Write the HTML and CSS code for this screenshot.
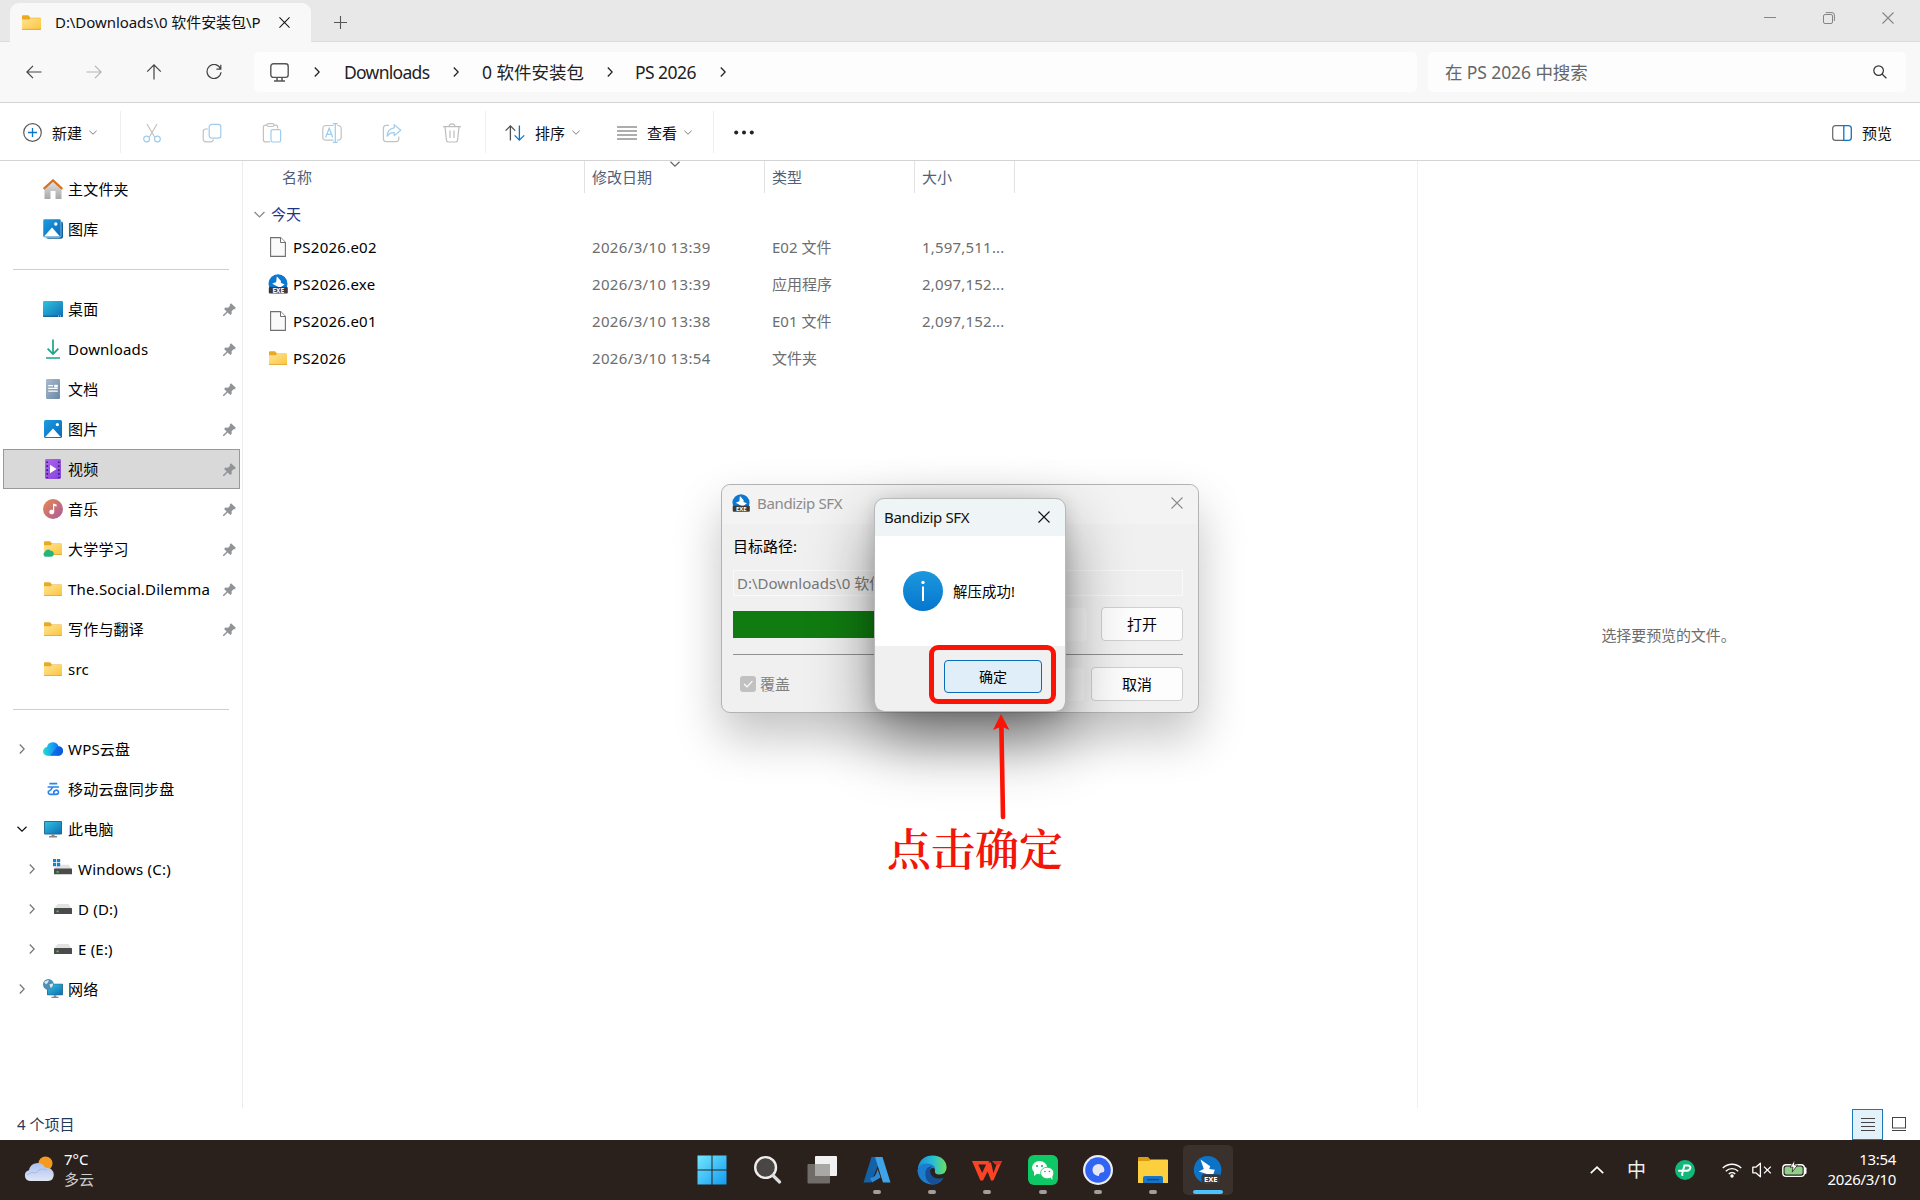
FILE: index.html
```
<!DOCTYPE html>
<html lang="zh-CN">

<head>
    <meta charset="UTF-8">
    <meta name="viewport" content="width=device-width, initial-scale=1.0">
    <title>PS 2026</title>
    <link rel="stylesheet" href="styles.css">
</head>

<body>
    <!-- 图标 -->
    <svg class="defs" width="0" height="0">
        <defs>
            <linearGradient id="gFolder" x1="0" y1="0" x2="1" y2="1"><stop offset="0" stop-color="#ffe394"/><stop offset="1" stop-color="#fbc53c"/></linearGradient>
            <linearGradient id="gBlue" x1="0" y1="0" x2="1" y2="1"><stop offset="0" stop-color="#1b9de2"/><stop offset="1" stop-color="#0a68b8"/></linearGradient>
            <linearGradient id="gInfo" x1="0" y1="0" x2="0" y2="1"><stop offset="0" stop-color="#1c98dc"/><stop offset="1" stop-color="#0676cf"/></linearGradient>
            <linearGradient id="gDesk" x1="0" y1="0" x2="1" y2="1"><stop offset="0" stop-color="#2fc3e0"/><stop offset="1" stop-color="#0f6fb5"/></linearGradient>
            <linearGradient id="gHome" x1="0" y1="0" x2="0" y2="1"><stop offset="0" stop-color="#e4e4e4"/><stop offset="1" stop-color="#a8a8a8"/></linearGradient>
            <linearGradient id="gMusic" x1="0" y1="0" x2="1" y2="1"><stop offset="0" stop-color="#ea8a4e"/><stop offset="1" stop-color="#a8589e"/></linearGradient>
            <linearGradient id="gVideo" x1="0" y1="0" x2="1" y2="1"><stop offset="0" stop-color="#b164f0"/><stop offset="1" stop-color="#8344d8"/></linearGradient>
            <linearGradient id="gDoc" x1="0" y1="0" x2="1" y2="1"><stop offset="0" stop-color="#a9bccd"/><stop offset="1" stop-color="#6a86a5"/></linearGradient>
            <linearGradient id="gCloud" x1="0" y1="0" x2="1" y2="0"><stop offset="0" stop-color="#1fe0cc"/><stop offset=".5" stop-color="#199cf5"/><stop offset="1" stop-color="#0a52e0"/></linearGradient>
            <linearGradient id="gWin" x1="0" y1="0" x2="1" y2="1"><stop offset="0" stop-color="#74e6fd"/><stop offset="1" stop-color="#119cf2"/></linearGradient>
            <linearGradient id="gEdge" x1="0" y1="0" x2="1" y2="0"><stop offset="0" stop-color="#1b8fd6"/><stop offset=".5" stop-color="#25bcd8"/><stop offset="1" stop-color="#6be05a"/></linearGradient>
            <linearGradient id="gWeather" x1="0" y1="0" x2="0" y2="1"><stop offset="0" stop-color="#a9c0ee"/><stop offset="1" stop-color="#dfe6f6"/></linearGradient>
        </defs>
        <symbol id="folder" viewBox="0 0 18 14">
            <path d="M0 1.2Q0 .2 1 .2H6L8 2.4H17Q18 2.4 18 3.4V8H0Z" fill="#e9a921"/>
            <path d="M0 4.2H6.5L8 3H18V13Q18 14 17 14H1Q0 14 0 13Z" fill="url(#gFolder)"/>
            <path d="M0 13.5H18" stroke="#dda634" stroke-width=".8"/>
        </symbol>
        <symbol id="file" viewBox="0 0 16 20">
            <path d="M.6 .6H10.5L15.4 5.5V19.4H.6Z" fill="#fafafa" stroke="#707070" stroke-width="1.1"/>
            <path d="M10.5 .6V5.5H15.4" fill="#fff" stroke="#707070" stroke-width="1"/>
        </symbol>
        <symbol id="exe" viewBox="0 0 20 20">
            <circle cx="10" cy="9.7" r="9.5" fill="#0c78cf"/>
            <path d="M8.8 2.2L13 7L12.8 8.8L16.6 10.4L13 13H10.4L4.2 9.8L8.2 8Z" fill="#fff"/>
            <rect x=".8" y="13" width="19" height="6.6" rx="1" fill="#3a3a3a"/>
        </symbol>
        <symbol id="close" viewBox="0 0 12 12"><path d="M.5 .5L11.5 11.5M11.5 .5L.5 11.5" fill="none" stroke="currentColor" stroke-width="1.1"/></symbol>
        <symbol id="right" viewBox="0 0 6 10"><path d="M.8 .5L5.2 5L.8 9.5" fill="none" stroke="currentColor" stroke-width="1.3"/></symbol>
        <symbol id="down" viewBox="0 0 10 6"><path d="M.5 .8L5 5.2L9.5 .8" fill="none" stroke="currentColor" stroke-width="1.2"/></symbol>
        <symbol id="pin" viewBox="0 0 14 14">
            <path d="M8.6 .4L13.8 5.2L12.6 6.8L11.4 6.6L9.2 8.8L9.4 11.6L7.8 13L5 10.2L1.2 14L0 14L0 13L3.9 9.1L1.2 6.4L2.6 4.8L5.4 5.1L7.6 2.9L7.3 1.6Z" fill="#8f9499"/>
        </symbol>
        <symbol id="drive" viewBox="0 0 18 10">
            <path d="M3.5 0H14.5L18 5H0Z" fill="#e2e2e2"/>
            <rect y="4" width="18" height="6" rx=".6" fill="#4b4b4b"/>
            <rect x="2.6" y="6.6" width="2" height="1.6" fill="#45d848"/>
        </symbol>
        <symbol id="monitor" viewBox="0 0 18 17">
            <rect width="18" height="13.4" rx=".8" fill="#27698e"/>
            <rect x=".9" y=".9" width="16.2" height="11.6" fill="url(#gDesk)"/>
            <path d="M7.5 13.4H10.5V15H13V16.4H5V15H7.5Z" fill="#878787"/>
        </symbol>
        <symbol id="picture" viewBox="0 0 18 18">
            <rect width="18" height="18" rx="1.6" fill="url(#gBlue)"/>
            <path d="M1.2 17L9 8.6L16.8 17Z" fill="#fff"/><circle cx="13.4" cy="4.6" r="1.6" fill="#fff"/>
        </symbol>
    </svg>

    <!-- 标题栏 -->
    <div class="titlebar">
        <div class="tab">
            <svg class="tab-icon" width="19" height="15"><use href="#folder"/></svg>
            <span class="tab-title">D:\Downloads\0 软件安装包\P</span>
            <svg width="11" height="11"><use href="#close"/></svg>
        </div>
        <svg class="tab-add" width="13" height="13" viewBox="0 0 13 13"><path d="M6.5 0V13M0 6.5H13" stroke="#555" stroke-width="1.1"/></svg>
        <div class="win-btns">
            <svg width="12" height="12" viewBox="0 0 12 12"><path d="M0 5.5H12" stroke="#858585"/></svg>
            <svg width="12" height="12" viewBox="0 0 12 12"><rect x=".5" y="2.5" width="9" height="9" rx="1.5" fill="none" stroke="#858585"/><path d="M2.8 .6H9Q11.4 .6 11.4 3V9" fill="none" stroke="#858585"/></svg>
            <svg width="12" height="12"><use href="#close"/></svg>
        </div>
    </div>

    <!-- 地址栏 -->
    <div class="navbar">
        <div class="nav-btns">
            <svg width="16" height="14" viewBox="0 0 16 14"><path d="M15.5 7H1M7 .8L.9 7L7 13.2" fill="none" stroke="#444" stroke-width="1.2"/></svg>
            <svg width="16" height="14" viewBox="0 0 16 14"><path d="M.5 7H15M9 .8L15.1 7L9 13.2" fill="none" stroke="#b4b4b4" stroke-width="1.2"/></svg>
            <svg width="16" height="16" viewBox="0 0 16 16"><path d="M8 15.5V1M1.2 7.6L8 .9L14.8 7.6" fill="none" stroke="#444" stroke-width="1.2"/></svg>
            <svg width="16" height="16" viewBox="0 0 16 16"><path d="M14.6 5A7 7 0 1 0 15 8.2M14.8 .8V5.2H10.4" fill="none" stroke="#444" stroke-width="1.2"/></svg>
        </div>
        <div class="address">
            <svg class="pc" width="19" height="19" viewBox="0 0 19 19"><rect x=".8" y=".8" width="17.4" height="13.6" rx="2.6" fill="none" stroke="#555" stroke-width="1.4"/><path d="M7 14.5V17.5M12 14.5V17.5M4 18H15" fill="none" stroke="#555" stroke-width="1.5"/></svg>
            <svg class="sep" width="6" height="10"><use href="#right"/></svg>
            <span class="crumb crumb-1">Downloads</span>
            <svg class="sep" width="6" height="10"><use href="#right"/></svg>
            <span class="crumb crumb-2">0 软件安装包</span>
            <svg class="sep" width="6" height="10"><use href="#right"/></svg>
            <span class="crumb crumb-3">PS 2026</span>
            <svg class="sep" width="6" height="10"><use href="#right"/></svg>
        </div>
        <div class="search">
            <span>在 PS 2026 中搜索</span>
            <svg width="14" height="14" viewBox="0 0 14 14"><circle cx="5.6" cy="5.6" r="4.8" fill="none" stroke="#333" stroke-width="1.2"/><path d="M9 9L13.4 13.2" stroke="#333" stroke-width="1.2"/></svg>
        </div>
    </div>

    <!-- 工具栏 -->
    <div class="toolbar">
        <div class="tool new">
            <svg width="19" height="19" viewBox="0 0 19 19"><circle cx="9.5" cy="9.5" r="8.8" fill="none" stroke="#5c5c5c" stroke-width="1.2"/><path d="M9.5 5V14M5 9.5H14" stroke="#0b74c8" stroke-width="1.3"/></svg>
            <span>新建</span>
            <svg class="arrow" width="8" height="5"><use href="#down"/></svg>
        </div>
        <div class="tool-icons">
            <svg viewBox="0 0 20 20"><path d="M5 1L12.6 14M15 1L7.4 14" fill="none" stroke="#c2c2c2" stroke-width="1.2"/><circle cx="4.6" cy="16" r="2.9" fill="none" stroke="#9dccef" stroke-width="1.2"/><circle cx="15.4" cy="16" r="2.9" fill="none" stroke="#9dccef" stroke-width="1.2"/></svg>
            <svg viewBox="0 0 20 20"><path d="M6 6H4Q1.2 6 1.2 8.8V16Q1.2 18.8 4 18.8H8.5Q11 18.8 11.4 16.6" fill="none" stroke="#c2c2c2" stroke-width="1.2"/><rect x="7.2" y="1.4" width="11.6" height="13.8" rx="2.6" fill="none" stroke="#9dccef" stroke-width="1.2"/></svg>
            <svg viewBox="0 0 20 20"><path d="M5 2.2H3.4Q1.4 2.2 1.4 4.2V16.8Q1.4 18.8 3.4 18.8H8M12 2.2H13.6Q15.6 2.2 15.6 4.2V5.6" fill="none" stroke="#c2c2c2" stroke-width="1.2"/><rect x="5" y=".7" width="7" height="2.8" rx="1.4" fill="none" stroke="#c2c2c2" stroke-width="1.2"/><rect x="9" y="6.6" width="9.6" height="12.4" rx="1.4" fill="none" stroke="#9dccef" stroke-width="1.2"/></svg>
            <svg viewBox="0 0 20 20"><path d="M11.5 2.5H4Q.8 2.5 .8 5.7V14Q.8 17.2 4 17.2H11.5M15.2 2.5H16Q19.2 2.5 19.2 5.7V14Q19.2 17.2 16 17.2H15.2" fill="none" stroke="#c2c2c2" stroke-width="1.2"/><path d="M3.6 14.5L7.2 5.2L10.8 14.5M5 11.4H9.5M13.3 .8V19.2M10.8 .7H15.8M10.8 19.3H15.8" fill="none" stroke="#9dccef" stroke-width="1.2"/></svg>
            <svg viewBox="0 0 20 20"><path d="M7 2.4H4.2Q1.4 2.4 1.4 5.2V15.8Q1.4 18.6 4.2 18.6H14Q16.8 18.6 16.8 15.8V13.5" fill="none" stroke="#c2c2c2" stroke-width="1.2"/><path d="M12.2 1.6L18.8 7.2L12.2 12.6V9.6Q7.8 9.2 5.2 13.2Q5.4 5.6 12.2 4.8Z" fill="none" stroke="#9dccef" stroke-width="1.2" stroke-linejoin="round"/></svg>
            <svg viewBox="0 0 20 20"><path d="M1 3.6H19M7 3.4Q7.4 .8 10 .8T13 3.4M3 3.8L4.4 17Q4.6 19 6.4 19H13.6Q15.4 19 15.6 17L17 3.8M8 7.5V15M12 7.5V15" fill="none" stroke="#bdbdbd" stroke-width="1.2"/></svg>
        </div>
        <div class="tool sort">
            <svg width="20" height="16" viewBox="0 0 20 16"><path d="M5.4 15.5V1M.6 5.6L5.4 .9L10.2 5.6" fill="none" stroke="#505050" stroke-width="1.3"/><path d="M14.4 .5V15M9.6 10.4L14.4 15.1L19.2 10.4" fill="none" stroke="#0b74c8" stroke-width="1.3"/></svg>
            <span>排序</span>
            <svg class="arrow" width="8" height="5"><use href="#down"/></svg>
        </div>
        <div class="tool view">
            <svg width="20" height="14" viewBox="0 0 20 14"><path d="M0 1H20M0 5H20M0 9H20M0 13H20" stroke="#5c5c5c" stroke-width="1.2"/></svg>
            <span>查看</span>
            <svg class="arrow" width="8" height="5"><use href="#down"/></svg>
        </div>
        <svg class="more" width="20" height="5" viewBox="0 0 20 5"><circle cx="2.2" cy="2.5" r="2"/><circle cx="10" cy="2.5" r="2"/><circle cx="17.8" cy="2.5" r="2"/></svg>
        <div class="tool preview-btn">
            <svg width="20" height="16" viewBox="0 0 20 16"><path d="M12 .7H3.6Q.7 .7 .7 3.6V12.4Q.7 15.3 3.6 15.3H12" fill="none" stroke="#666" stroke-width="1.2"/><path d="M11.8 .7H16.4Q19.3 .7 19.3 3.6V12.4Q19.3 15.3 16.4 15.3H11.8Z" fill="none" stroke="#0b74c8" stroke-width="1.3"/></svg>
            <span>预览</span>
        </div>
    </div>

    <div class="main">
        <!-- 侧边导航 -->
        <div class="sidebar">
            <div class="item">
                <svg width="20" height="20" viewBox="0 0 20 20"><path d="M1.5 9L10 1.5L18.5 9V20H12.5V12H7.5V20H1.5Z" fill="url(#gHome)"/><path d="M.6 10L10 1.4L19.4 10" fill="none" stroke="#d9711c" stroke-width="2.2"/></svg>
                <span>主文件夹</span>
            </div>
            <div class="item">
                <svg width="20" height="20" viewBox="0 0 20 20"><rect x="3" y="2.4" width="17" height="17.4" rx="2" fill="#155f99"/><rect width="18" height="18.4" rx="1.6" fill="url(#gBlue)" stroke="#fff" stroke-width=".5"/><path d="M1 17.4L9 8.6L17 17.4Z" fill="#fff"/><circle cx="12.8" cy="5" r="1.7" fill="#fff"/></svg>
                <span>图库</span>
            </div>
            <div class="line"></div>
            <div class="item">
                <svg width="20" height="16" viewBox="0 0 20 16"><rect width="20" height="16" rx="1.2" fill="url(#gDesk)"/><path d="M0 15.2H20" stroke="#125a90" stroke-width="1"/><path d="M15 15H19" stroke="#fff" stroke-width=".8" stroke-dasharray="1"/></svg>
                <span>桌面</span><svg class="pin"><use href="#pin"/></svg>
            </div>
            <div class="item">
                <svg width="20" height="20" viewBox="0 0 20 20"><path d="M10 .5V15M4.6 9.6L10 15L15.4 9.6M3 19H17" fill="none" stroke="#1ba587" stroke-width="1.7"/></svg>
                <span>Downloads</span><svg class="pin"><use href="#pin"/></svg>
            </div>
            <div class="item">
                <svg width="20" height="20" viewBox="0 0 20 20"><rect x="3" width="14" height="20" rx="1.2" fill="url(#gDoc)"/><path d="M5.2 6.6H10M5.2 9.4H14.8M5.2 12.2H14.8" stroke="#fff" stroke-width="1.2"/><rect x="11.2" y="5.8" width="3.6" height="2.6" fill="#fff"/></svg>
                <span>文档</span><svg class="pin"><use href="#pin"/></svg>
            </div>
            <div class="item">
                <svg width="20" height="18"><use href="#picture"/></svg>
                <span>图片</span><svg class="pin"><use href="#pin"/></svg>
            </div>
            <div class="item active">
                <svg width="20" height="20" viewBox="0 0 20 20"><rect x="2" width="16" height="20" rx="1.4" fill="url(#gVideo)"/><path d="M4.2 2.4V19M15.8 2.4V19" stroke="#3b1d78" stroke-width="1.7" stroke-dasharray="1.7 2.2"/><path d="M7 5.8L13.6 10L7 14.2Z" fill="#fff"/></svg>
                <span>视频</span><svg class="pin"><use href="#pin"/></svg>
            </div>
            <div class="item">
                <svg width="20" height="20" viewBox="0 0 20 20"><circle cx="10" cy="10" r="10" fill="url(#gMusic)"/><path d="M10 4.4L13.6 5.4V7.6L11.2 7V12.8A2.5 2.3 0 1 1 10 11Z" fill="#fff"/></svg>
                <span>音乐</span><svg class="pin"><use href="#pin"/></svg>
            </div>
            <div class="item">
                <svg width="20" height="16" viewBox="0 0 20 16"><use href="#folder" x="1" y="0" width="18" height="14"/><path d="M2.6 15.8A2.6 2.6 0 0 1 1.8 11A3.4 3.4 0 0 1 7.6 9.8A2.9 2.9 0 0 1 8 15.8Z" fill="#23b77c"/></svg>
                <span>大学学习</span><svg class="pin"><use href="#pin"/></svg>
            </div>
            <div class="item">
                <svg width="20" height="14"><use href="#folder"/></svg>
                <span>The.Social.Dilemma</span><svg class="pin"><use href="#pin"/></svg>
            </div>
            <div class="item">
                <svg width="20" height="14"><use href="#folder"/></svg>
                <span>写作与翻译</span><svg class="pin"><use href="#pin"/></svg>
            </div>
            <div class="item">
                <svg width="20" height="14"><use href="#folder"/></svg>
                <span>src</span>
            </div>
            <div class="line"></div>
            <div class="item">
                <svg class="exp" width="6" height="10"><use href="#right"/></svg>
                <svg width="20" height="16" viewBox="0 0 20 16"><path d="M5 14.8A4.4 4.4 0 0 1 4 6A6 6 0 0 1 15.4 5A4.9 4.9 0 0 1 15 14.8Z" fill="url(#gCloud)"/><path d="M7 14.8L14.6 5.6Q19.6 6 19.4 10.2Q19 14.8 15 14.8Z" fill="#0b55dd" opacity=".6"/></svg>
                <span>WPS云盘</span>
            </div>
            <div class="item">
                <svg width="20" height="14" viewBox="0 0 20 14"><path d="M6.4 1.6H14.2M4.6 5H16M9.6 5Q8.4 8.4 5.4 9.4Q4.8 12.4 8 12.4H12.8Q16 12.2 15.4 9.6Q14.6 7.6 12.2 8.4Q10 9.4 11 12" fill="none" stroke="#2a82ec" stroke-width="1.6"/></svg>
                <span>移动云盘同步盘</span>
            </div>
            <div class="item">
                <svg class="exp open" width="10" height="6"><use href="#down"/></svg>
                <svg width="20" height="17"><use href="#monitor"/></svg>
                <span>此电脑</span>
            </div>
            <div class="item sub">
                <svg class="exp" width="6" height="10"><use href="#right"/></svg>
                <svg width="20" height="20" viewBox="0 0 20 20"><use href="#drive" x="1" y="5.5" width="18" height="10"/><path d="M0 0H3.2V3.2H0ZM4 0H7.2V3.2H4ZM0 4H3.2V7.2H0ZM4 4H7.2V7.2H4Z" fill="#1484cf"/></svg>
                <span>Windows (C:)</span>
            </div>
            <div class="item sub">
                <svg class="exp" width="6" height="10"><use href="#right"/></svg>
                <svg width="20" height="10"><use href="#drive"/></svg>
                <span>D (D:)</span>
            </div>
            <div class="item sub">
                <svg class="exp" width="6" height="10"><use href="#right"/></svg>
                <svg width="20" height="10"><use href="#drive"/></svg>
                <span>E (E:)</span>
            </div>
            <div class="item">
                <svg class="exp" width="6" height="10"><use href="#right"/></svg>
                <svg width="20" height="20" viewBox="0 0 20 20"><use href="#monitor" x="4" y="4.5" width="16" height="15"/><circle cx="5.4" cy="5.4" r="5.4" fill="#4c8fb4"/><path d="M1 3Q4 .6 6 1.4Q4.8 4.2 3 5.6ZM6.4 5.2L10 4.4Q10.4 7.4 7.6 9Z" fill="#d3e8f2"/></svg>
                <span>网络</span>
            </div>
        </div>

        <!-- 文件列表 -->
        <div class="list">
            <div class="list-head">
                <span class="c-name">名称</span>
                <span class="c-date">修改日期<svg class="sorted" width="10" height="6"><use href="#down"/></svg></span>
                <span class="c-type">类型</span>
                <span class="c-size">大小</span>
            </div>
            <div class="group"><svg width="11" height="7"><use href="#down"/></svg><span>今天</span></div>
            <div class="row">
                <span class="c-name"><svg width="20" height="20"><use href="#file"/></svg>PS2026.e02</span>
                <span class="c-date">2026/3/10 13:39</span>
                <span class="c-type">E02 文件</span>
                <span class="c-size">1,597,511...</span>
            </div>
            <div class="row">
                <span class="c-name"><svg width="20" height="20" viewBox="0 0 20 20"><use href="#exe"/><text x="10.3" y="18.6" class="exe-text" font-size="6.6" text-anchor="middle">EXE</text></svg>PS2026.exe</span>
                <span class="c-date">2026/3/10 13:39</span>
                <span class="c-type">应用程序</span>
                <span class="c-size">2,097,152...</span>
            </div>
            <div class="row">
                <span class="c-name"><svg width="20" height="20"><use href="#file"/></svg>PS2026.e01</span>
                <span class="c-date">2026/3/10 13:38</span>
                <span class="c-type">E01 文件</span>
                <span class="c-size">2,097,152...</span>
            </div>
            <div class="row">
                <span class="c-name"><svg width="20" height="14"><use href="#folder"/></svg>PS2026</span>
                <span class="c-date">2026/3/10 13:54</span>
                <span class="c-type">文件夹</span>
                <span class="c-size"></span>
            </div>
        </div>

        <div class="preview">选择要预览的文件。</div>
    </div>

    <div class="status">
        <span>4 个项目</span>
        <div class="view-mode on"><svg width="14" height="14" viewBox="0 0 14 14"><path d="M0 .5H14M0 4.5H14M0 8.5H14M0 12.5H14" stroke="#444"/></svg></div>
        <div class="view-mode"><svg width="14" height="14" viewBox="0 0 14 14"><rect x=".5" y=".5" width="13" height="10.5" fill="none" stroke="#444"/><path d="M0 13.5H14" stroke="#444"/></svg></div>
    </div>

    <!-- 任务栏 -->
    <div class="taskbar">
        <div class="weather">
            <svg width="30" height="26" viewBox="0 0 30 26"><circle cx="21.5" cy="7.5" r="7" fill="#f59a1f"/><path d="M6 25A5.5 5.5 0 0 1 5 14.2A8.6 8.6 0 0 1 21 11.5Q29.6 12 29.8 18.8Q29.4 25 24 25Z" fill="url(#gWeather)"/><path d="M3 19Q7 15 12 17Q16 11 23 14" fill="none" stroke="#8ea9e2" stroke-width="1" opacity=".6"/></svg>
            <div><p>7°C</p><p>多云</p></div>
        </div>
        <div class="apps">
            <div class="app"><svg viewBox="0 0 30 30"><path d="M.5 .5H14.5V14.5H.5ZM15.5 .5H29.5V14.5H15.5ZM.5 15.5H14.5V29.5H.5ZM15.5 15.5H29.5V29.5H15.5Z" fill="url(#gWin)"/></svg></div>
            <div class="app"><svg viewBox="0 0 30 30"><circle cx="13.6" cy="12.5" r="10.4" fill="#4a4644" stroke="#eee" stroke-width="2.4"/><path d="M21 20.5L27.6 27" stroke="#ddd" stroke-width="3.2" stroke-linecap="round"/></svg></div>
            <div class="app"><svg viewBox="0 0 30 30"><rect x="8" y="1" width="22" height="20" rx="1" fill="#f1f1f1"/><rect x=".5" y="9" width="22.5" height="19.5" rx="1" fill="#777472" opacity=".9"/><path d="M8 9H23V21H8Z" fill="#aaa8a7"/></svg></div>
            <div class="app run"><svg viewBox="0 0 30 30"><path d="M9.5 2H19.5L9 27.5H1.5Z" fill="#1362a8"/><path d="M13 2H20.5L28.5 27.5H21Z" fill="#3fa3e8"/><path d="M8 23Q14 23 15.5 14L18.6 22.5L10 27.5Z" fill="#2f8ad6"/></svg></div>
            <div class="app run"><svg viewBox="0 0 30 30"><path d="M1 12Q4 .4 15.5 .4Q29 1.2 29.6 12.6Q29.4 19.4 22.4 19.6Q17 19.6 18 15.6Q18 11 12.5 10Q5 10 1 18Z" fill="url(#gEdge)"/><path d="M.4 15Q2.4 8.6 10 8.6Q17.4 9 18.4 14.2Q15 11.6 13 15.2Q11.6 21 18 24Q22 26 26.6 22.8Q22.6 29.6 14.6 29.6Q1.4 28 .4 15Z" fill="#1d7ccb"/><path d="M8.6 16Q10.4 11.4 15 11.6Q11.8 14.8 14 19.6Q17.4 25.2 26 23Q21.6 29.6 14.6 29.6Q6.8 24.6 8.6 16Z" fill="#145199"/></svg></div>
            <div class="app run"><svg viewBox="0 0 30 30"><path d="M0 6H17.5L14.5 9.6H6.2L10.2 18L15 7.6H19L21.4 18L26 6H30L21.4 25.6H19L15.6 16.4L11 25.6H8.4Z" fill="#fa4425"/><path d="M20 6H30L28.4 9.6H23.4Z" fill="#e02e20"/></svg></div>
            <div class="app run"><svg viewBox="0 0 30 30"><rect width="30" height="30" rx="6" fill="#10c765"/><ellipse cx="11.6" cy="12.6" rx="7.6" ry="6.6" fill="#fff"/><path d="M6 16L6 21L10 18Z" fill="#fff"/><ellipse cx="19.2" cy="18" rx="6.6" ry="5.8" fill="#fff" stroke="#10c765" stroke-width=".8"/><path d="M22 22L24.4 25V20Z" fill="#fff"/><g fill="#10a75a"><circle cx="9" cy="11" r="1"/><circle cx="14" cy="11" r="1"/><circle cx="17" cy="16.5" r=".8"/><circle cx="21.4" cy="16.5" r=".8"/></g></svg></div>
            <div class="app run"><svg viewBox="0 0 30 30"><circle cx="15" cy="15" r="15" fill="#ecedf3"/><circle cx="15" cy="15" r="12.8" fill="#3064f5"/><path d="M15 9A6 6 0 1 0 16 21Q15.4 17.4 21 17A6 6 0 0 0 15 9Z" fill="#e4e6f2"/></svg></div>
            <div class="app run"><svg viewBox="0 0 30 30"><path d="M0 3Q0 2 1 2H10L12.4 4.4V9H0Z" fill="#d99a15"/><path d="M0 6H11L13 4.4H29Q30 4.4 30 5.4V28H0Z" fill="#fccf3f"/><path d="M5 28V23Q5 21 7 21H23Q25 21 25 23V28Z" fill="#1675c4"/><path d="M9 24.6H21" stroke="#0d4c8a" stroke-width="1.4"/></svg></div>
            <div class="app run current"><svg viewBox="0 0 30 30"><circle cx="14.6" cy="14.8" r="13.8" fill="#0d73c6"/><path d="M7.5 4.4L17.2 11.2L16.2 14L21.8 14.8L20.4 19H14L5.8 16.6L10.8 14Z" fill="#fff"/><rect x="8.6" y="19.2" width="18.5" height="9" rx="2" fill="#383838"/><text x="17.8" y="26.6" class="exe-text" font-size="7.6" text-anchor="middle">EXE</text></svg></div>
        </div>
        <div class="tray">
            <svg width="14" height="8" viewBox="0 0 14 8"><path d="M.8 7.2L7 1.2L13.2 7.2" fill="none" stroke="#fff" stroke-width="1.7"/></svg>
            <span class="ime">中</span>
            <svg class="green" width="20" height="20" viewBox="0 0 20 20"><circle cx="10" cy="10" r="10" fill="#12b87a"/><path d="M7.4 15Q6.8 15 7.4 13L9.4 5.6H12.6Q16 5.8 15.2 8.4Q14.4 10.8 11.4 10.8H4" fill="none" stroke="#fff" stroke-width="2" stroke-linecap="round"/></svg>
            <svg class="wifi" width="20" height="16" viewBox="0 0 20 16"><path d="M.8 6A13 13 0 0 1 19.2 6M3.8 9.2A8.8 8.8 0 0 1 16.2 9.2M6.8 12A4.6 4.6 0 0 1 13.2 12" fill="none" stroke="#fff" stroke-width="1.4"/><circle cx="10" cy="14" r="1.7" fill="#fff"/></svg>
            <svg class="sound" width="20" height="16" viewBox="0 0 20 16"><path d="M.8 5.2H3.8L8.4 1.2V14.8L3.8 10.8H.8ZM12 4.6L18.8 11.4M18.8 4.6L12 11.4" fill="none" stroke="#fff" stroke-width="1.3" stroke-linejoin="round"/></svg>
            <svg class="battery" width="25" height="18" viewBox="0 0 25 18"><rect x=".8" y="4.8" width="21.6" height="11.6" rx="3.4" fill="none" stroke="#fff" stroke-width="1.4"/><rect x="2.6" y="6.6" width="18" height="8" rx="1.8" fill="#90ce8a"/><path d="M23.6 8.2V13" stroke="#fff" stroke-width="1.8" stroke-linecap="round"/><path d="M12.8 0L8 7.2H11L10.2 12L15.6 5H12.4Z" fill="#fff" stroke="#2b211c" stroke-width=".8"/></svg>
            <div class="clock"><p>13:54</p><p>2026/3/10</p></div>
        </div>
    </div>

    <!-- Bandizip 窗口 -->
    <div class="win sfx">
        <div class="sfx-title">
            <svg width="18" height="18" viewBox="0 0 20 20"><use href="#exe"/><text x="10.3" y="18.6" class="exe-text" font-size="6.6" text-anchor="middle">EXE</text></svg>
            <span>Bandizip SFX</span>
            <svg class="x" width="12" height="12"><use href="#close"/></svg>
        </div>
        <div class="sfx-label">目标路径:</div>
        <div class="sfx-path">D:\Downloads\0 软件安装包</div>
        <div class="sfx-row">
            <div class="progress"></div>
            <div class="ghost"></div>
            <div class="btn open-btn">打开</div>
        </div>
        <div class="sfx-foot">
            <svg width="16" height="16" viewBox="0 0 16 16"><rect width="16" height="16" rx="3" fill="#c1c1c1"/><path d="M4 8L7 11L12.4 5.2" fill="none" stroke="#fff" stroke-width="1.2"/></svg>
            <span>覆盖</span>
            <div class="ghost"></div>
            <div class="btn cancel-btn">取消</div>
        </div>
    </div>

    <!-- 提示框 -->
    <div class="win msg">
        <div class="msg-title"><span>Bandizip SFX</span><svg width="12" height="12"><use href="#close"/></svg></div>
        <div class="msg-body">
            <svg width="40" height="40" viewBox="0 0 40 40"><circle cx="20" cy="20" r="20" fill="url(#gInfo)"/><circle cx="20" cy="11.4" r="1.7" fill="#fff"/><path d="M20 15.4V30" stroke="#fff" stroke-width="2"/></svg>
            <span>解压成功!</span>
        </div>
        <div class="msg-foot"><div class="ok">确定</div></div>
    </div>

    <!-- 标注 -->
    <div class="mark-box"></div>
    <svg class="mark-arrow" width="20" height="108" viewBox="0 0 20 108"><path d="M10.4 12L12 103" stroke="#fb1306" stroke-width="4.6" stroke-linecap="round"/><path d="M10 0L18.4 16L10.4 12.4L2 16Z" fill="#fb1306"/></svg>
    <div class="mark-text">点击确定</div>
</body>

</html>
```
FILE: styles.css
```
* {
    box-sizing: border-box;
    margin: 0;
    padding: 0;
}

body {
    position: relative;
    width: 1920px;
    height: 1200px;
    overflow: hidden;
    display: flex;
    flex-direction: column;
    background: #fff;
    color: #111;
    font-family: "Noto Sans", "Noto Sans CJK SC", sans-serif;
    font-size: 15px;
    line-height: 20px;
    white-space: nowrap;
}

svg {
    display: block;
    flex-shrink: 0;
}

.defs {
    position: absolute;
}

.exe-text {
    fill: #fff;
    font-weight: bold;
    font-family: "Noto Sans", sans-serif;
    letter-spacing: 0;
}

/* 标题栏 */
.titlebar {
    height: 42px;
    display: flex;
    align-items: flex-end;
    background: #e8e8e8;
    border-bottom: 1px solid #dcdcdc;
}

.tab {
    width: 301px;
    height: 39px;
    margin: 0 0 -1px 10px;
    padding: 0 20px 1px 12px;
    display: flex;
    align-items: center;
    background: #f8f8f8;
    border-radius: 9px 9px 0 0;
}

.tab-title {
    width: 207px;
    margin: 0 17px 0 14px;
    letter-spacing: -0.06px;
}

.tab-add {
    margin: 0 0 12px 23px;
}

.win-btns {
    display: flex;
    gap: 47px;
    margin: 0 26px 17px auto;
    color: #858585;
}

/* 地址栏 */
.navbar {
    height: 61px;
    display: flex;
    align-items: center;
    background: #f8f8f8;
    border-bottom: 1px solid #d4d4d4;
    font-size: 17.5px;
    line-height: 24px;
}

.nav-btns {
    width: 254px;
    display: flex;
    align-items: center;
    gap: 44px;
    padding-left: 26px;
}

.address {
    width: 1163px;
    height: 40px;
    margin-right: 11px;
    padding-left: 16px;
    display: flex;
    align-items: center;
    background: #fdfdfd;
    border-radius: 5px;
    color: #222;
}

.pc {
    margin-right: 25px;
}

.crumb {
    margin: 0 24px;
}

.crumb-1 {
    width: 85px;
    letter-spacing: -0.7px;
}

.crumb-2 {
    width: 101px;
    margin-left: 23px;
}

.crumb-3 {
    width: 61px;
    margin-left: 22px;
    letter-spacing: -0.55px;
}

.search {
    width: 478px;
    height: 40px;
    padding: 0 19px 0 17px;
    display: flex;
    align-items: center;
    justify-content: space-between;
    background: #fdfdfd;
    border-radius: 5px;
    color: #666;
    letter-spacing: -0.1px;
}

/* 工具栏 */
.toolbar {
    height: 58px;
    display: flex;
    align-items: center;
    border-bottom: 1px solid #d4d4d4;
}

.tool {
    display: flex;
    align-items: center;
    padding-top: 2px;
}

.tool span {
    margin: 0 7px 0 10px;
}

.arrow {
    color: #777;
}

.new {
    width: 121px;
    height: 42px;
    padding-left: 23px;
    border-right: 1px solid #efefef;
}

.tool-icons {
    width: 365px;
    height: 42px;
    padding: 2px 0 0 21px;
    display: flex;
    align-items: center;
    gap: 40px;
    border-right: 1px solid #efefef;
}

.tool-icons svg {
    width: 20px;
    height: 20px;
}

.sort {
    margin-left: 19px;
}

.view {
    width: 97px;
    height: 42px;
    margin-left: 37px;
    border-right: 1px solid #efefef;
}

.more {
    margin: 2px 0 0 20px;
    fill: #222;
}

.preview-btn {
    margin-left: auto;
    margin-right: 21px;
}

/* 主体 */
.main {
    flex: 1;
    display: flex;
}

.sidebar {
    width: 243px;
    padding-top: 8px;
    border-right: 1px solid #ececec;
    color: #000;
}

.item {
    height: 40px;
    width: 237px;
    margin-left: 3px;
    padding: 0 4px 0 40px;
    display: flex;
    align-items: center;
    gap: 5px;
    letter-spacing: 0.2px;
}

.item.active {
    background: #d9d9d9;
    border: 1px solid #999;
    padding: 0 3px 0 39px;
}

.sub {
    padding-left: 50px;
}

.pin {
    width: 13px;
    height: 13px;
    margin-left: auto;
}

/* 展开箭头占用左侧空白 */
.exp {
    margin: 0 13px 0 -24px;
    color: #777;
}

.exp.open {
    margin: 0 11px 0 -26px;
    color: #111;
}

.line {
    height: 40px;
    margin: 0 13px;
    display: flex;
    align-items: center;
}

.line::before {
    content: "";
    width: 217px;
    height: 1px;
    background: #cfcfcf;
}

/* 列表 */
.list {
    width: 1175px;
    border-right: 1px solid #f0f0f0;
    color: #6d6d6d;
}

.list-head {
    height: 32px;
    display: flex;
    line-height: 32px;
    color: #4f6078;
}

.list-head span {
    border-right: 1px solid #e2e2e2;
    position: relative;
}

.c-name {
    width: 342px;
    padding-left: 25px;
    display: flex;
    align-items: center;
    gap: 5px;
    color: #000;
}

.list-head .c-name {
    padding-left: 39px;
    color: inherit;
}

.c-date {
    width: 180px;
    padding-left: 7px;
}

.c-type {
    width: 150px;
    padding-left: 7px;
}

.c-size {
    width: 100px;
    padding-left: 7px;
}

.sorted {
    position: absolute;
    top: 0;
    left: 85px;
    color: #666;
}

.group {
    height: 36px;
    margin-bottom: -1px;
    padding: 6px 0 0 11px;
    display: flex;
    align-items: center;
    gap: 6px;
    color: #1e3287;
}

.group svg {
    color: #888;
}

.row {
    height: 37px;
    display: flex;
    align-items: center;
}

.row .c-name {
    letter-spacing: 0.25px;
}

.row .c-date {
    letter-spacing: 0.35px;
}

.row .c-size {
    letter-spacing: 0.2px;
}

.preview {
    flex: 1;
    padding-right: 1px;
    display: flex;
    align-items: center;
    justify-content: center;
    color: #6d6d6d;
    letter-spacing: -0.1px;
}

/* 状态栏 */
.status {
    height: 32px;
    padding-left: 17px;
    display: flex;
    align-items: center;
    color: #1f3a5c;
}

.view-mode {
    width: 31px;
    height: 31px;
    display: flex;
    align-items: center;
    justify-content: center;
}

.view-mode:last-child {
    margin-right: 6px;
}

.view-mode.on {
    margin-left: auto;
    margin-top: 1px;
    background: #e3f1fa;
    border: 1px solid #1a7ab8;
}

/* 任务栏 */
.taskbar {
    height: 60px;
    display: flex;
    background: #2b211c;
    color: #fff;
}

.weather {
    width: 684px;
    padding: 0 0 2px 24px;
    display: flex;
    align-items: center;
    gap: 10px;
}

.weather p+p {
    color: #ccc;
}

.apps {
    display: flex;
    gap: 5.1px;
    padding-top: 5px;
    margin-left: 3px;
}

.app {
    width: 50px;
    height: 50px;
    display: flex;
    flex-direction: column;
    align-items: center;
    padding-top: 10px;
    border-radius: 5px;
}

.app svg {
    width: 30px;
    height: 30px;
}

.run::after {
    content: "";
    width: 8px;
    height: 4px;
    margin-top: 5px;
    border-radius: 2px;
    background: #a39e9b;
}

.current {
    background: #3a302c;
}

.current::after {
    width: 30px;
    background: #4cc2ff;
}

.tray {
    margin-left: auto;
    padding-right: 24px;
    display: flex;
    align-items: center;
}

.ime {
    margin-left: 23px;
    font-size: 19px;
    color: #eee;
}

.green {
    margin-left: 29px;
}

.wifi {
    margin-left: 27px;
}

.sound {
    margin-left: 10px;
}

.battery {
    margin-left: 10px;
    margin-bottom: 2px;
}

.clock {
    width: 89px;
    padding-bottom: 2px;
    text-align: right;
    letter-spacing: -0.3px;
}

/* 弹窗 */
.win {
    position: absolute;
    border-radius: 9px;
    background: #f0f0f0;
}

.sfx {
    left: 721px;
    top: 484px;
    width: 478px;
    height: 229px;
    padding: 0 15px 0 11px;
    border: 1px solid #b3b3b3;
    box-shadow: 0 24px 48px rgba(0, 0, 0, .24);
}

.sfx-title {
    height: 39px;
    margin: 0 -15px 0 -11px;
    padding: 0 15px 3px 10px;
    display: flex;
    align-items: center;
    gap: 7px;
    border-radius: 9px 9px 0 0;
    background: #f3f3f3;
    color: #8c8c8c;
    letter-spacing: -0.35px;
}

.sfx-title .x {
    margin-left: auto;
}

.sfx-label {
    height: 46px;
    padding-top: 12px;
    color: #000;
}

.sfx-path {
    height: 26px;
    width: 450px;
    padding-left: 3px;
    border: 1px solid #f9f9f9;
    line-height: 24px;
    color: #777;
}

.sfx-row {
    height: 59px;
    width: 450px;
    display: flex;
    align-items: center;
    padding-bottom: 2px;
    border-bottom: 1px solid #919191;
}

.progress {
    width: 300px;
    height: 27px;
    background: #107c10;
}

.ghost {
    width: 54px;
    height: 33px;
    border-radius: 4px;
    background: #f5f5f5;
}

.btn {
    height: 34px;
    border: 1px solid #d0d0d0;
    border-radius: 4px;
    background: #fdfdfd;
    line-height: 32px;
    text-align: center;
    color: #000;
}

.open-btn {
    width: 82px;
    margin-left: auto;
}

.sfx-foot {
    height: 58px;
    width: 450px;
    padding: 0 0 0 7px;
    display: flex;
    align-items: center;
    gap: 4px;
    color: #808080;
}

.sfx-foot .ghost {
    margin-left: auto;
}

.cancel-btn {
    width: 92px;
    margin-left: 3px;
}

.msg {
    left: 875px;
    top: 499px;
    width: 190px;
    height: 212px;
    outline: 1px solid #b9b9b9;
    overflow: hidden;
    box-shadow: 0 28px 64px rgba(0, 0, 0, .46), 0 2px 18px rgba(0, 0, 0, .16);
}

.msg-title {
    height: 37px;
    padding: 0 15px 2px 9px;
    display: flex;
    align-items: center;
    justify-content: space-between;
    background: #eff4f6;
    letter-spacing: -0.35px;
}

.msg-body {
    height: 110px;
    padding-left: 28px;
    display: flex;
    align-items: center;
    gap: 10px;
    background: #fff;
    font-size: 14.4px;
    color: #000;
}

.msg-body span {
    padding-top: 2px;
    letter-spacing: 0.1px;
}

.msg-foot {
    padding: 14px 0 0 69px;
}

.ok {
    width: 98px;
    height: 33px;
    border: 1px solid #0a6cb8;
    border-radius: 4px;
    background: #e0eef9;
    line-height: 32px;
    text-align: center;
    font-size: 14px;
    color: #000;
}

/* 红色标注 */
.mark-box {
    position: absolute;
    left: 929px;
    top: 645px;
    width: 127px;
    height: 59px;
    border: 5px solid #fb1306;
    border-radius: 9px;
}

.mark-arrow {
    position: absolute;
    left: 991px;
    top: 714px;
}

.mark-text {
    position: absolute;
    left: 887px;
    top: 815px;
    font-family: "Noto Serif CJK SC", "SimSun", "Liberation Serif", serif;
    font-size: 44px;
    font-weight: 600;
    line-height: 64px;
    color: #f31508;
}
```
